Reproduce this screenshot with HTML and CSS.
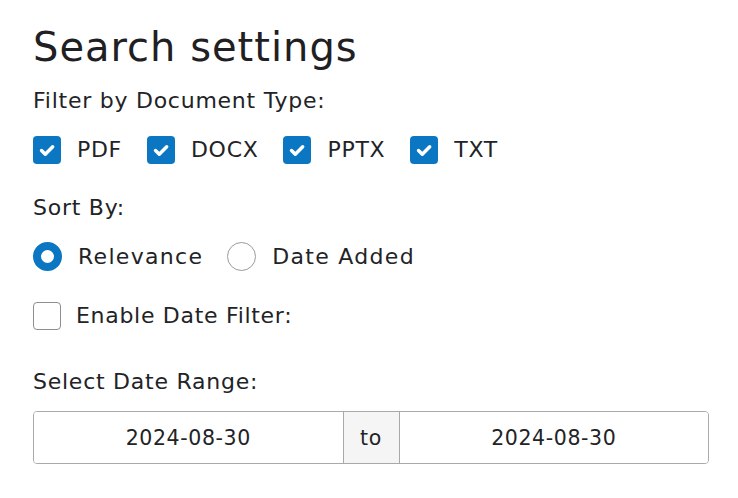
FILE: index.html
```html
<!DOCTYPE html>
<html lang="en">
<head>
<meta charset="utf-8">
<title>Search settings</title>
<link rel="stylesheet" href="styles.css">
</head>
<body>
<div class="settings">
  <h1 class="title">Search settings</h1>

  <div class="label label-filter">Filter by Document Type:</div>
  <div class="check-row">
    <label class="opt opt-check">
      <span class="box checked"><svg viewBox="0 0 28 28" width="28" height="28"><path d="M8.5 14.5l3.8 3.8 7.4-7.6" fill="none" stroke="#fff" stroke-width="3.4" stroke-linecap="round" stroke-linejoin="round"/></svg></span>
      <span class="opt-text">PDF</span>
    </label>
    <label class="opt opt-check">
      <span class="box checked"><svg viewBox="0 0 28 28" width="28" height="28"><path d="M8.5 14.5l3.8 3.8 7.4-7.6" fill="none" stroke="#fff" stroke-width="3.4" stroke-linecap="round" stroke-linejoin="round"/></svg></span>
      <span class="opt-text">DOCX</span>
    </label>
    <label class="opt opt-check">
      <span class="box checked"><svg viewBox="0 0 28 28" width="28" height="28"><path d="M8.5 14.5l3.8 3.8 7.4-7.6" fill="none" stroke="#fff" stroke-width="3.4" stroke-linecap="round" stroke-linejoin="round"/></svg></span>
      <span class="opt-text">PPTX</span>
    </label>
    <label class="opt opt-check">
      <span class="box checked"><svg viewBox="0 0 28 28" width="28" height="28"><path d="M8.5 14.5l3.8 3.8 7.4-7.6" fill="none" stroke="#fff" stroke-width="3.4" stroke-linecap="round" stroke-linejoin="round"/></svg></span>
      <span class="opt-text">TXT</span>
    </label>
  </div>

  <div class="label label-sort">Sort By:</div>
  <div class="radio-row">
    <label class="opt opt-radio">
      <span class="radio checked"></span>
      <span class="opt-text">Relevance</span>
    </label>
    <label class="opt opt-radio">
      <span class="radio"></span>
      <span class="opt-text">Date Added</span>
    </label>
  </div>

  <label class="opt enable-row">
    <span class="box empty"></span>
    <span class="opt-text">Enable Date Filter:</span>
  </label>

  <div class="label label-range">Select Date Range:</div>
  <div class="range">
    <div class="range-field">2024-08-30</div>
    <div class="range-to">to</div>
    <div class="range-field">2024-08-30</div>
  </div>
</div>
</body>
</html>
```

FILE: styles.css
```css
html, body {
  margin: 0;
  padding: 0;
  background: #ffffff;
}

body {
  font-family: "DejaVu Sans", Inter, "Liberation Sans", sans-serif;
  color: #222326;
}

.settings {
  display: flex;
  flex-direction: column;
  align-items: flex-start;
  padding: 24px 29px 0 33px;
}

.title {
  margin: 0;
  font-size: 40px;
  line-height: 46px;
  font-weight: 400;
  letter-spacing: 1px;
  color: #1f2023;
}

.label {
  font-size: 22px;
  line-height: 30px;
  letter-spacing: 0.75px;
}

.label-filter { margin-top: 16px; }
.label-sort { margin-top: 29px; }
.label-range { margin-top: 37px; }

.check-row,
.radio-row {
  display: flex;
  align-items: center;
}

.check-row {
  margin-top: 20px;
  gap: 25px;
}

.radio-row {
  margin-top: 19px;
  gap: 24px;
}

.opt {
  display: flex;
  align-items: center;
  gap: 16px;
  font-size: 22px;
  line-height: 28px;
  letter-spacing: 0.7px;
}

.opt-radio {
  letter-spacing: 1.3px;
}

.opt-text {
  display: block;
}

.box {
  width: 28px;
  height: 28px;
  box-sizing: border-box;
  border-radius: 4px;
  flex: none;
  display: block;
}

.box svg {
  display: block;
}

.box.checked {
  background: #0b77c2;
}

.box.empty {
  border: 1px solid #8e8e8e;
}

.radio {
  width: 29px;
  height: 29px;
  box-sizing: border-box;
  border-radius: 50%;
  border: 1px solid #9a9a9a;
  background: #fff;
  flex: none;
}

.radio.checked {
  border: 8.5px solid #0b77c2;
}

.enable-row {
  margin-top: 31px;
  gap: 15px;
}

.range {
  margin-top: 14px;
  width: 676px;
  height: 53px;
  box-sizing: border-box;
  border: 1px solid #a9a9a9;
  border-radius: 4px;
  display: flex;
  overflow: hidden;
  font-size: 20.5px;
  letter-spacing: 0.6px;
}

.range-field {
  flex: 1;
  display: flex;
  align-items: center;
  justify-content: center;
  background: #fff;
}

.range-to {
  width: 57px;
  flex: none;
  display: flex;
  align-items: center;
  justify-content: center;
  background: #f5f5f5;
  border-left: 1px solid #a9a9a9;
  border-right: 1px solid #a9a9a9;
  box-sizing: border-box;
}
```
